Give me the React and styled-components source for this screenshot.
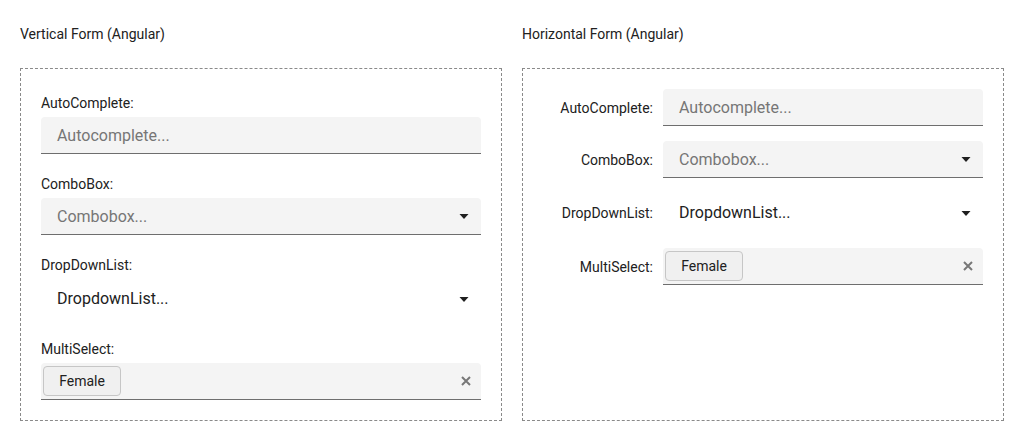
import React from 'react';
import styled, { createGlobalStyle } from 'styled-components';

const GlobalStyle = createGlobalStyle`
  body {
    margin: 0;
    background: #fff;
    font-family: Roboto, "Liberation Sans", sans-serif;
    color: #212121;
  }
`;

const Page = styled.div`
  display: grid;
  grid-template-columns: 482px 482px;
  column-gap: 20px;
  padding: 24px 20px 20px 20px;
`;

const Column = styled.div`
  display: flex;
  flex-direction: column;
`;

const Title = styled.div`
  font-size: 14px;
  line-height: 20px;
  color: #212121;
  margin-bottom: 24px;
`;

const Panel = styled.div`
  border: 1px dashed #8a8a8a;
  height: 353px;
  box-sizing: border-box;
  padding: ${(props) => (props.horizontal ? '20px 19px 20px 20px' : '24px 20px 20px')};
  display: flex;
  flex-direction: column;
  gap: ${(props) => (props.horizontal ? '15px' : '20px')};
`;

const Field = styled.div`
  display: flex;
  flex-direction: ${(props) => (props.horizontal ? 'row' : 'column')};
  align-items: ${(props) => (props.horizontal ? 'center' : 'stretch')};
  gap: ${(props) => (props.horizontal ? '10px' : '4px')};
`;

const Label = styled.label`
  font-size: 14px;
  line-height: 20px;
  color: #212121;
  width: ${(props) => (props.horizontal ? '110px' : 'auto')};
  text-align: ${(props) => (props.horizontal ? 'right' : 'left')};
  flex-shrink: 0;
`;

const InputBox = styled.div`
  display: flex;
  align-items: center;
  box-sizing: border-box;
  width: ${(props) => (props.horizontal ? '320px' : '100%')};
  height: ${(props) => (props.flat ? '40px' : '37px')};
  background: ${(props) => (props.flat ? 'transparent' : '#f4f4f4')};
  border-bottom: 1px solid ${(props) => (props.flat ? 'transparent' : '#6e6e6e')};
  border-radius: 4px 4px 0 0;
  padding: ${(props) => (props.chips ? '0 10px 0 2px' : '0 10px 0 16px')};
`;

const Text = styled.span`
  flex: 1;
  font-size: 16px;
  color: ${(props) => (props.placeholder ? '#767676' : '#212121')};
`;

const Chip = styled.span`
  display: inline-flex;
  align-items: center;
  justify-content: center;
  box-sizing: border-box;
  width: 78px;
  height: 30px;
  font-size: 14px;
  color: #212121;
  background: #f0f0f0;
  border: 1px solid #c6c6c6;
  border-radius: 4px;
  margin-right: auto;
`;

const Icon = styled.svg`
  width: 10px;
  height: 10px;
  flex-shrink: 0;
  margin-right: ${(props) => (props.clear ? '0' : '2px')};
`;

const Arrow = () => (
  <Icon viewBox="0 0 10 10">
    <path d="M0.5 3 L9.5 3 L5 8 Z" fill="#1f1f1f" />
  </Icon>
);

const Clear = () => (
  <Icon clear viewBox="0 0 10 10">
    <path d="M1 1 L9 9 M9 1 L1 9" stroke="#777" strokeWidth="2" />
  </Icon>
);

function Form({ horizontal }) {
  return (
    <Panel horizontal={horizontal}>
      <Field horizontal={horizontal}>
        <Label horizontal={horizontal}>AutoComplete:</Label>
        <InputBox horizontal={horizontal}>
          <Text placeholder>Autocomplete...</Text>
        </InputBox>
      </Field>
      <Field horizontal={horizontal}>
        <Label horizontal={horizontal}>ComboBox:</Label>
        <InputBox horizontal={horizontal}>
          <Text placeholder>Combobox...</Text>
          <Arrow />
        </InputBox>
      </Field>
      <Field horizontal={horizontal}>
        <Label horizontal={horizontal}>DropDownList:</Label>
        <InputBox horizontal={horizontal} flat>
          <Text>DropdownList...</Text>
          <Arrow />
        </InputBox>
      </Field>
      <Field horizontal={horizontal}>
        <Label horizontal={horizontal}>MultiSelect:</Label>
        <InputBox horizontal={horizontal} chips>
          <Chip>Female</Chip>
          <Clear />
        </InputBox>
      </Field>
    </Panel>
  );
}

export default function App() {
  return (
    <>
      <GlobalStyle />
      <Page>
        <Column>
          <Title>Vertical Form (Angular)</Title>
          <Form />
        </Column>
        <Column>
          <Title>Horizontal Form (Angular)</Title>
          <Form horizontal />
        </Column>
      </Page>
    </>
  );
}
